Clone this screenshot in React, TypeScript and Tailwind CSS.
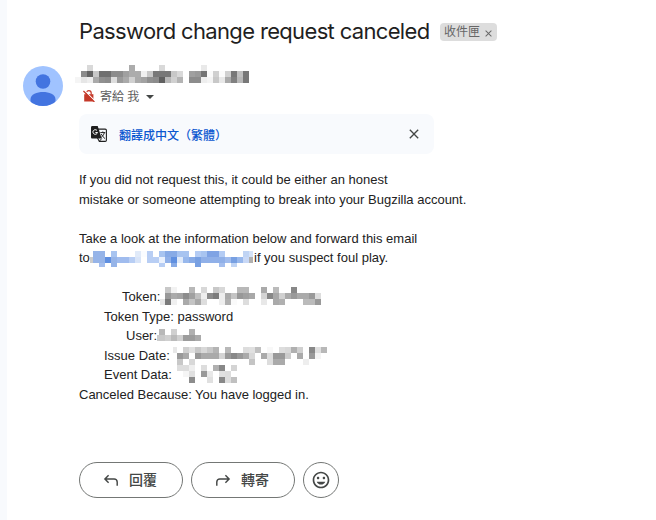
import React from "react";
import { MdClose, MdOutlineInsertEmoticon } from "react-icons/md";

const CELL = 6;

type MosaicProps = { rows: string[]; crop?: number; width: number; height?: number; className?: string };

// Each row is a list of cells: ".." is empty, two hex digits are a grey, six are a colour.
function Mosaic({ rows, crop = 0, width, height = rows.length * CELL, className = "" }: MosaicProps) {
  return (
    <svg
      className={`shrink-0 ${className}`}
      width={width}
      height={height}
      viewBox={`${crop} 0 ${width} ${height}`}
      shapeRendering="crispEdges"
      aria-hidden="true"
    >
      {rows.flatMap((row, y) =>
        row.trim().split(/\s+/).map((c, x) =>
          c === ".." ? null : (
            <rect key={`${x}-${y}`} x={x * CELL} y={y * CELL} width={CELL} height={CELL} fill={`#${c.length === 2 ? c + c + c : c}`} />
          ),
        ),
      )}
    </svg>
  );
}

const SENDER = [
  ".. .. d9 .. .. .. .. .. .. ac .. .. .. .. d9 .. .. .. .. .. .. e9",
  ".. 8c 64 c8 70 70 8c 8c a0 ac ac f0 c8 78 78 78 c8 d9 .. a0 9a 74 fa d0 fb d0 78 c0 78",
  "f5 e6 ee aa 90 8c dd 9a aa d0 aa a2 90 8c 60 b8 d0 b4 .. 8c 8c ee f4 c8 e8 aa 80 b8 78",
];

const ADDRESS = [
  ".. 96b4e8 96b4e8 .. a8c4f0 .. .. .. e0eaf9 fafcff b8cef4 .. a8c4f0 88abe6 88abe6 a8c4f0 a8c4f0 .. b4ccf4 a8c4f0 7fa3e4 7fa3e4 b4ccf4 .. .. .. c0d4f4 d4e2f8",
  "cc 96b4e8 96b4e8 5f8fe0 96b4e8 a0bcee a0bcee b8cef4 d8e4f8 .. b8cef4 b8cef4 eaf1fd 90b0e8 6090e0 e0eaf9 98b8ec 88abe6 78a0e2 90b0e8 90b0e8 90b0e8 90b0e8 a0bcee 78a0e2 98b8ec c8d8f6 b0",
  ".. .. a4beee .. 96b4e8 .. .. .. .. .. .. .. b8cef4 .. 88abe6 .. .. .. 78a0e2 .. .. .. a4beee .. c0d4f4",
];

const TOKEN = [
  ".. c8 f2 .. .. b8 .. d8 .. c8 d8 .. .. b8 b8 .. .. aa .. bb .. .. 88",
  ".. 99 aa a4 8c a0 c0 ee 8c 7c ee aa c4 98 a0 a8 .. d4 88 a8 d0 aa 99 aa aa 99 dd",
  "e6 7a f0 .. aa c4 a8 dd .. .. ee b0 fa .. dd .. .. e8 .. aa b0 .. .. .. bb bb 99",
];

const USER = [
  ".. b8 .. d0 .. .. b0 ..",
  "cc c8 d0 bb d0 9c 9c aa",
];

const ISSUE_AND_EVENT = [
  "e8 .. d0 e0 c8 d8 c8 b4 .. b8 .. .. dd e0 c0 .. f8 .. dd d8 b0 d0 .. 88 e0 b8",
  ".. 99 aa .. 99 aa aa aa d4 99 88 99 aa d8 .. aa dd 99 99 cc .. aa .. 99 f4",
  ".. c8 .. d8 .. .. .. .. .. .. .. .. .. c4 .. .. dd aa aa .. .. .. ee",
  ".. dd dd ee .. dd .. b0 88 .. d4",
  ".. .. f5 e0 .. 99 e8 .. e0 dd",
  ".. .. .. 8c .. .. e0 .. 88 dd c0",
];

function Avatar() {
  return (
    <svg className="size-10 shrink-0" viewBox="0 0 40 40" aria-hidden="true">
      <clipPath id="avatar-clip"><circle cx="20" cy="20" r="20" /></clipPath>
      <g clipPath="url(#avatar-clip)">
        <rect width="40" height="40" fill="#a0c3ff" />
        <circle cx="20" cy="15.5" r="7.3" fill="#4374e0" />
        <path d="M7.5 40v-6.5C7.5 28 14 26 20 26s12.5 2 12.5 7.5V40z" fill="#4374e0" />
      </g>
    </svg>
  );
}

function NoEncryption() {
  return (
    <svg className="h-3 w-3" viewBox="0 0 12 12" fill="none" aria-hidden="true">
      <path d="M1.2 4.2h9.2v7.3H1.2z" fill="#c53929" />
      <path d="M3.4 4.4V3.1a2.4 2.4 0 0 1 4.8 0v1.3" stroke="#c53929" strokeWidth="1.2" />
      <path d="M1.2.2 12 11" stroke="#fff" strokeWidth="1.1" />
      <path d="M.4 1 11.4 12" stroke="#c53929" strokeWidth="1.3" />
    </svg>
  );
}

function TranslateIcon() {
  return (
    <svg className="size-4 shrink-0" viewBox="0 0 16 16" fill="none" aria-hidden="true">
      <path d="M7 3.1h7.2c.7 0 1.2.5 1.2 1.2v9.9c0 .7-.5 1.2-1.2 1.2H8.4L6.5 12" stroke="#1f1f1f" strokeWidth="1.1" />
      <path d="M1.3 0h5.4l4 12.6H1.3C.6 12.6 0 12 0 11.3V1.3C0 .6.6 0 1.3 0z" fill="#1f1f1f" />
      <path d="M6 4.5a2.3 2.3 0 1 0 .5 2H4.400" stroke="#fff" strokeWidth="1" />
      <path d="M9.3 6.6h5M11.8 5.5v1M13.3 6.8c-.5 2-1.7 3.5-3.1 4.6M10.3 8c.8 1.8 2.200 3.5 3.8 4.7" stroke="#1f1f1f" strokeWidth="1" />
      <path d="M8.4 15.2l2.3-2.6" stroke="#1f1f1f" strokeWidth="1" />
    </svg>
  );
}

function ReplyArrow({ flipped = false }: { flipped?: boolean }) {
  return (
    <svg className={`size-4 ${flipped ? "-scale-x-100" : ""}`} viewBox="0 0 16 16" fill="none" stroke="#444746" strokeWidth="1.45" aria-hidden="true">
      <path d="M5.6 3.3 1.9 7l3.7 3.7M2 7h9.2a3 3 0 0 1 3 3v3.8" />
    </svg>
  );
}

export default function App() {
  return (
    <div className="flex h-[520px] w-[656px] overflow-hidden bg-white font-['Liberation_Sans','Noto_Sans_CJK_TC',sans-serif]">
      <div className="w-[7px] shrink-0 bg-[#f8fafd]" />
      <main className="flex flex-col pl-4">
        <header className="flex h-[65px] items-start pt-[18px] pl-14">
          <h1 className="w-[361px] whitespace-nowrap font-['Inter',sans-serif] text-[22px] leading-[26px] tracking-[-0.66px] text-[#1f1f1f]">
            Password change request canceled
          </h1>
          <span className="mt-[5px] flex h-[18px] w-[57px] items-center justify-between rounded bg-[#ddd] pr-[3px] pl-1 text-xs leading-[18px] text-[#666]">
            收件匣
            <MdClose className="mt-0.5 size-[11px]" />
          </span>
        </header>

        <div className="flex h-[49px]">
          <div className="w-14 pt-px"><Avatar /></div>
          <div>
            <Mosaic rows={SENDER} width={174} className="-ml-1" />
            <div className="mt-1 flex h-[18px] items-center pl-1 text-xs text-[#5e5e5e]">
              <NoEncryption />
              <span className="ml-[5px] pt-0.5">寄給 我</span>
              <svg className="mt-px ml-[7px] h-1 w-2" viewBox="0 0 8 4" fill="#444746" aria-hidden="true"><path d="M0 0h8L4 4z" /></svg>
            </div>
          </div>
        </div>

        <div className="ml-14 flex h-10 w-[355px] items-center rounded-lg bg-[#f8fafd] px-3">
          <TranslateIcon />
          <span className="ml-3 flex-1 pt-[3px] text-xs font-medium text-[#0b57d0]">翻譯成中文（繁體）</span>
          <MdClose className="size-4 text-[#444746]" />
        </div>

        <article className="ml-14 mt-4 flex h-[292px] flex-col whitespace-pre text-[13px] leading-[19.5px] text-[#222]">
          <p>If you did not request this, it could be either an honest</p>
          <p>mistake or someone attempting to break into your Bugzilla account.</p>
          <p className="mt-[19.5px]">Take a look at the information below and forward this email</p>
          <p className="flex h-[19.5px] items-start">
            <span className="w-[11px]">to</span>
            <Mosaic rows={ADDRESS} crop={3} width={163} height={16} className="mt-[2.5px]" />
            <span className="ml-px">if you suspect foul play.</span>
          </p>
          <div className="mt-[19.5px] flex h-[39px] flex-col">
            <p className="flex h-[19.5px] pl-[43px]">
              <span className="w-[38px]">Token:</span>
              <Mosaic rows={TOKEN} crop={1} width={161} />
            </p>
            <p className="pl-[25px]">Token Type: password</p>
          </div>
          <p className="flex h-[19.5px] pl-[47px]">
            <span className="w-[31px]">User:</span>
            <Mosaic rows={USER} crop={4} width={44} className="mt-[3px]" />
          </p>
          <div className="flex h-[39px] pl-[25px]">
            <div className="w-[69px]">
              <p>Issue Date:</p>
              <p>Event Data:</p>
            </div>
            <Mosaic rows={ISSUE_AND_EVENT} crop={2} width={154} className="mt-px" />
          </div>
          <p>Canceled Because: You have logged in.</p>
        </article>

        <footer className="ml-14 flex gap-2 text-sm font-medium text-[#444746]">
          <button className="flex h-9 w-[104px] items-center justify-center gap-2.5 rounded-full border border-[#747775] pr-0.5">
            <ReplyArrow />
            回覆
          </button>
          <button className="flex h-9 w-[104px] items-center justify-center gap-2.5 rounded-full border border-[#747775] pr-0.5">
            <ReplyArrow flipped />
            轉寄
          </button>
          <button className="flex size-9 items-center justify-center rounded-full border border-[#747775]">
            <MdOutlineInsertEmoticon className="size-5" />
          </button>
        </footer>
      </main>
    </div>
  );
}
